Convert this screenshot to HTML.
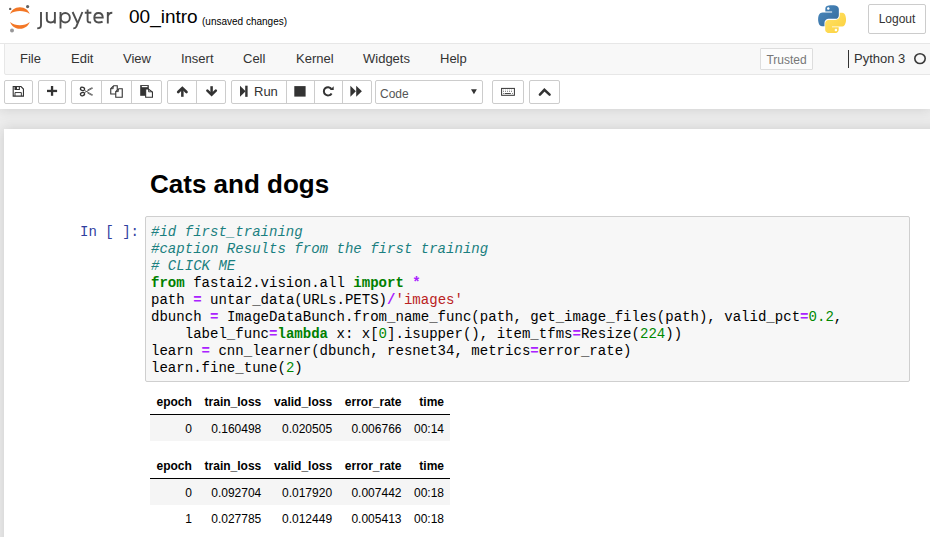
<!DOCTYPE html>
<html><head><meta charset="utf-8">
<style>
*{box-sizing:border-box;margin:0;padding:0}
html,body{width:930px;height:537px;overflow:hidden}
body{background:#eee;font-family:"Liberation Sans",sans-serif;font-size:13px;color:#000;position:relative}
#header{position:absolute;left:0;top:0;width:930px;height:109px;background:#fff;box-shadow:0 0 12px 1px rgba(87,87,87,0.2);z-index:2}
#nbc{position:absolute;left:4px;top:129px;width:1000px;height:600px;background:#fff;box-shadow:0 0 12px 1px rgba(87,87,87,0.2);z-index:1}
.abs{position:absolute}
#fname{left:129px;top:6px;font-size:19px;line-height:22px;color:#000}
#autosave{left:202px;top:16px;font-size:10px;line-height:12px;color:#000}
#logout{left:868px;top:4px;width:58px;height:30px;border:1px solid #ccc;border-radius:2px;font-size:12px;line-height:28px;text-align:center;color:#333}
#menubar{left:4px;top:43px;width:940px;height:32px;background:#f8f8f8;border:1px solid #e7e7e7;border-radius:0 0 2px 2px}
.mi{position:absolute;top:7px;font-size:13px;line-height:15px;color:#333}
#trusted{left:760px;top:48px;width:53px;height:22px;border:1px solid #ddd;border-radius:1px;font-size:12px;line-height:22px;text-align:center;color:#777;background:#fcfcfc}
#kbar{left:848px;top:50px;width:1px;height:18px;background:#333}
#kname{left:854px;top:51px;font-size:13px;line-height:16px;color:#333}
#kcirc{left:914px;top:53px;width:11px;height:11px;border:2px solid #333;border-radius:50%}
.btn{position:absolute;top:80px;height:24px;border:1px solid #ccc;background:#fff;border-radius:2px}
.btn svg{position:absolute}
.sep{position:absolute;top:0;width:1px;height:22px;background:#ccc}
#sel{left:375px;top:80px;width:108px;height:24px;border:1px solid #ccc;border-radius:2px;background:#fff}
#sel span{position:absolute;left:4px;top:6px;font-size:12px;line-height:14px;color:#555}
#h1{left:150px;top:169px;font-size:26px;font-weight:bold;line-height:30px;color:#000}
#prompt{left:80px;top:224px;font-family:"Liberation Mono",monospace;font-size:14.05px;line-height:17px;color:#303F9F}
#input{left:145px;top:216px;width:765px;height:166px;background:#f7f7f7;border:1px solid #cfcfcf;border-radius:2px}
#code{left:151px;top:224px;font-family:"Liberation Mono",monospace;font-size:14.05px;line-height:17px;color:#000;white-space:pre}
.c{color:#1a7f80;font-style:italic}
.k{color:#008000;font-weight:bold}
.o{color:#AA22FF;font-weight:bold}
.s{color:#BA2121}
.n{color:#080}
table{position:absolute;left:150px;border-collapse:collapse;font-size:12px;width:300px}
th,td{text-align:right;padding:7px 6px 5px;line-height:14px;height:26px}
th{font-weight:bold}
thead tr{border-bottom:1px solid #000}
tbody tr:nth-child(odd){background:#f5f5f5}
</style></head><body>
<div id="header">
  <svg class="abs" style="left:0;top:0" width="120" height="40" viewBox="0 0 120 40">
    <path d="M10.1,13.9 C11.2,10.3 14.8,7.2 19.9,7.2 C25,7.2 28.6,10.3 29.7,13.9 C27,11.7 23.6,10.9 19.9,10.9 C16.2,10.9 12.8,11.7 10.1,13.9 Z" fill="#F37726"/>
    <path d="M10.1,22 C11.2,25.7 14.8,28.8 19.9,28.8 C25,28.8 28.6,25.7 29.7,22 C27,24.3 23.6,25.3 19.9,25.3 C16.2,25.3 12.8,24.3 10.1,22 Z" fill="#F37726"/>
    <circle cx="10.2" cy="8.9" r="1.2" fill="#616262"/>
    <circle cx="27.6" cy="6.6" r="1.6" fill="#616262"/>
    <circle cx="12" cy="30.5" r="2" fill="#989798"/>
    <g fill="none" stroke="#4E4E4E" stroke-width="1.9">
      <path d="M41,12 V25.2 C41,27.5 39.8,28.3 37.2,28.4"/>
      <path d="M46.8,12 V18.5 C46.8,21.3 48.3,22.45 50.8,22.45 C53.3,22.45 54.9,21.2 54.9,18.5 M54.9,12 V23.4"/>
      <path d="M60.5,12 V28.5"/><ellipse cx="65.25" cy="17.7" rx="4.6" ry="4.75"/>
      <path d="M72.6,12 L77.7,23.3 M82.4,12 L76.3,26.6 C75.7,27.9 74.8,28.4 73.3,28.4"/>
      <path d="M87.6,9.4 V20.5 C87.6,22.2 88.6,22.6 91.1,22.5 M84.8,12.8 H91.4"/>
      <path d="M94.3,17.6 H102.75 C102.75,14.4 100.9,12.95 98.5,12.95 C95.9,12.95 94.3,15 94.3,17.7 C94.3,20.6 96,22.45 98.7,22.45 C100.3,22.45 101.6,22.1 102.6,21.6"/>
      <path d="M107.8,12 V23.4 M107.8,16.6 C108.3,13.9 110,12.8 112.3,12.8"/>
    </g>
  </svg>
  <div id="fname" class="abs">00_intro</div>
  <div id="autosave" class="abs">(unsaved changes)</div>
  <svg class="abs" style="left:818px;top:5px" width="28" height="28" viewBox="0 0 110 110"><defs><linearGradient id="pb" x1="0" y1="0" x2="1" y2="1"><stop offset="0" stop-color="#4a8bc0"/><stop offset="1" stop-color="#34689a"/></linearGradient><linearGradient id="py" x1="0" y1="0" x2="1" y2="1"><stop offset="0" stop-color="#ffe36a"/><stop offset="1" stop-color="#fccf3a"/></linearGradient></defs>
    <path fill="url(#pb)" d="M54.9,0.9c-4.6,0-9,0.4-12.8,1.1C30.8,4,28.8,8.1,28.8,15.7v10h26.6v3.3H18.8c-7.7,0-14.5,4.6-16.6,13.5c-2.4,10.1-2.5,16.5,0,27.1c1.9,7.9,6.4,13.5,14.1,13.5h9.1V70.9c0-8.8,7.6-16.5,16.6-16.5h26.6c7.4,0,13.3-6.1,13.3-13.5V15.7c0-7.2-6.1-12.6-13.3-13.8C64.2,1.2,59.5,0.9,54.9,0.9z M40.5,8.9c2.8,0,5,2.3,5,5.1c0,2.8-2.3,5-5,5c-2.8,0-5-2.2-5-5C35.5,11.2,37.7,8.9,40.5,8.9z"/>
    <path fill="url(#py)" d="M85.4,29v12.3c0,9.6-8.1,17.6-17.4,17.6H41.4c-7.3,0-13.3,6.2-13.3,13.5v25.3c0,7.2,6.3,11.4,13.3,13.5c8.4,2.5,16.6,2.9,26.6,0c6.7-1.9,13.3-5.8,13.3-13.5V87.6H54.9v-3.4h39.9c7.7,0,10.6-5.4,13.3-13.5c2.8-8.4,2.7-16.4,0-27.1c-1.9-7.7-5.6-13.5-13.3-13.5H85.4z M70.4,93c2.8,0,5,2.2,5,5c0,2.8-2.3,5.1-5,5.1c-2.8,0-5-2.3-5-5.1C65.4,95.3,67.6,93,70.4,93z"/>
  </svg>
  <div id="logout" class="abs">Logout</div>
  <div class="abs" style="left:0;top:43px;width:930px;height:1px;background:#e7e7e7"></div>
  <div id="menubar" class="abs">
    <span class="mi" style="left:15px">File</span>
    <span class="mi" style="left:66px">Edit</span>
    <span class="mi" style="left:118px">View</span>
    <span class="mi" style="left:176px">Insert</span>
    <span class="mi" style="left:238px">Cell</span>
    <span class="mi" style="left:291px">Kernel</span>
    <span class="mi" style="left:358px">Widgets</span>
    <span class="mi" style="left:435px">Help</span>
  </div>
  <div id="trusted" class="abs">Trusted</div>
  <div id="kbar" class="abs"></div>
  <div id="kname" class="abs">Python 3</div>
  

  <div class="btn" style="left:4px;width:29px"></div>
  <div class="btn" style="left:38px;width:28px"></div>
  <div class="btn" style="left:71px;width:91px"><div class="sep" style="left:29px"></div><div class="sep" style="left:59px"></div></div>
  <div class="btn" style="left:167px;width:59px"><div class="sep" style="left:28px"></div></div>
  <div class="btn" style="left:231px;width:141px"><span style="position:absolute;left:22px;top:3px;font-size:13px;line-height:15px;color:#333">Run</span><div class="sep" style="left:54px"></div><div class="sep" style="left:82px"></div><div class="sep" style="left:110px"></div></div>
  <div id="sel" class="abs"><span>Code</span></div>
  <div class="btn" style="left:492px;width:32px"></div>
  <div class="btn" style="left:529px;width:31px"></div>
</div>
<svg class="abs" style="left:0;top:0;z-index:5" width="930" height="109" viewBox="0 0 930 109">
  <g fill="#333" stroke="none">
    <!-- save -->
    <path d="M13.2,86.55 H21 L23.45,89 V96.15 H13.2 Z" fill="none" stroke="#333" stroke-width="1.1"/>
    <rect x="14.5" y="86" width="5.4" height="4"/>
    <rect x="17" y="87.1" width="1.8" height="1.9" fill="#fff"/>
    <path d="M15,96.15 V92.55 H21.35 V96.15" fill="none" stroke="#333" stroke-width="0.95"/>
    <!-- plus -->
    <rect x="50.9" y="86" width="2.3" height="9.8"/>
    <rect x="47" y="89.8" width="10.1" height="2.3"/>
    <!-- scissors -->
    <ellipse cx="82.5" cy="88.9" rx="2.1" ry="1.6" transform="rotate(20 82.5 88.9)" fill="none" stroke="#333" stroke-width="1.3"/>
    <ellipse cx="82.5" cy="94.1" rx="2.1" ry="1.6" transform="rotate(-20 82.5 94.1)" fill="none" stroke="#333" stroke-width="1.3"/>
    <path d="M84.4,90.3 L92.6,94.9 L91.5,95.2 L87.5,93 M84.4,92.7 L92.6,88.2 L91.5,87.9 L87.5,90" fill="none" stroke="#555" stroke-width="0.9"/>
    <!-- copy -->
    <path d="M110.75,88.7 L113.7,85.75 H117.25 V94.05 H110.75 Z" fill="#fff" stroke="#333" stroke-width="1.1"/>
    <path d="M110.75,88.7 H113.2 V86.2" fill="none" stroke="#333" stroke-width="0.9"/>
    <path d="M115.75,91.6 L118.8,88.75 H122.25 V97.25 H115.75 Z" fill="#fff" stroke="#333" stroke-width="1.1"/>
    <path d="M115.75,91.6 H118.3 V89.2" fill="none" stroke="#333" stroke-width="0.9"/>
    <!-- paste -->
    <rect x="140.2" y="85.1" width="8.6" height="10.7"/>
    <rect x="141.8" y="86" width="5.7" height="1.2" fill="#fff"/>
    <path d="M145.65,89.05 H148.4 L152.45,92 V97.2 H145.65 Z" fill="#fff" stroke="#333" stroke-width="1.1"/>
    <path d="M148.6,89.2 V91.8 H152.2" fill="none" stroke="#333" stroke-width="0.9"/>
    <!-- up -->
    <path d="M182.35,88.5 V96.8" fill="none" stroke="#333" stroke-width="2.5"/>
    <path d="M178.2,92 L182.35,88 L186.5,92" fill="none" stroke="#333" stroke-width="2.6" stroke-linecap="round"/>
    <!-- down -->
    <path d="M211.6,86.2 V95" fill="none" stroke="#333" stroke-width="2.5"/>
    <path d="M207.4,90.6 L211.6,94.6 L215.8,90.6" fill="none" stroke="#333" stroke-width="2.6" stroke-linecap="round"/>
    <!-- step forward -->
    <path d="M240,85.7 L245.6,91.3 L240,96.85 Z"/>
    <rect x="245.2" y="85.7" width="2.4" height="11.15"/>
    <!-- stop -->
    <rect x="294.3" y="86.1" width="11.3" height="10.5"/>
    <!-- restart -->
    <path d="M331.4,88.9 A4.15,4.15 0 1 0 331.6,93.4" fill="none" stroke="#333" stroke-width="2"/>
    <path d="M329.9,90.1 L333.7,90.1 L333.7,86.2 Z"/>
    <!-- ff -->
    <path d="M350.4,85.8 L355.9,91.35 L350.4,96.85 Z"/>
    <path d="M356.2,85.8 L361.9,91.35 L356.2,96.85 Z"/>
    <!-- select arrow -->
    <path d="M471,89.3 H476.9 L473.95,94.3 Z"/>
    <!-- keyboard -->
    <rect x="501.6" y="88.4" width="12.8" height="6.9" fill="none" stroke="#333" stroke-width="1"/>
    <path d="M503,89.8 H513" fill="none" stroke="#ccc" stroke-width="0.9" stroke-dasharray="1,1"/>
    <path d="M503,91.3 H513" fill="none" stroke="#666" stroke-width="0.9" stroke-dasharray="1,1"/>
    <path d="M504.7,93.5 H510.8" fill="none" stroke="#333" stroke-width="0.9"/>
    <path d="M503,93.5 H504 M512,93.5 H513" fill="none" stroke="#777" stroke-width="0.9"/>
    <!-- chevron up -->
    <path d="M539.9,94.6 L544.4,89.8 L549.6,94.6" fill="none" stroke="#333" stroke-width="2.5" stroke-linecap="round"/>
    <!-- kernel circle -->
    <ellipse cx="920" cy="58.6" rx="5.2" ry="4.9" fill="none" stroke="#3a3a3a" stroke-width="1.6"/>
  </g>
</svg>
<div id="nbc"></div>
<div class="abs" id="h1" style="z-index:3">Cats and dogs</div>
<div class="abs" id="input" style="z-index:3"></div>
<div class="abs" id="prompt" style="z-index:3">In [ ]:</div>
<div class="abs" id="code" style="z-index:3"><span class="c">#id first_training</span>
<span class="c">#caption Results from the first training</span>
<span class="c"># CLICK ME</span>
<span class="k">from</span> fastai2.vision.all <span class="k">import</span> <span class="o">*</span>
path <span class="o">=</span> untar_data(URLs.PETS)<span class="o">/</span><span class="s">'images'</span>
dbunch <span class="o">=</span> ImageDataBunch.from_name_func(path, get_image_files(path), valid_pct<span class="o">=</span><span class="n">0.2</span>,
    label_func<span class="o">=</span><span class="k">lambda</span> x: x[<span class="n">0</span>].isupper(), item_tfms<span class="o">=</span>Resize(<span class="n">224</span>))
learn <span class="o">=</span> cnn_learner(dbunch, resnet34, metrics<span class="o">=</span>error_rate)
learn.fine_tune(<span class="n">2</span>)</div>
<table style="top:388px;z-index:3">
<thead><tr><th>epoch</th><th>train_loss</th><th>valid_loss</th><th>error_rate</th><th>time</th></tr></thead>
<tbody><tr><td>0</td><td>0.160498</td><td>0.020505</td><td>0.006766</td><td>00:14</td></tr></tbody>
</table>
<table style="top:452px;z-index:3">
<thead><tr><th>epoch</th><th>train_loss</th><th>valid_loss</th><th>error_rate</th><th>time</th></tr></thead>
<tbody><tr><td>0</td><td>0.092704</td><td>0.017920</td><td>0.007442</td><td>00:18</td></tr>
<tr><td>1</td><td>0.027785</td><td>0.012449</td><td>0.005413</td><td>00:18</td></tr></tbody>
</table>
</body></html>
